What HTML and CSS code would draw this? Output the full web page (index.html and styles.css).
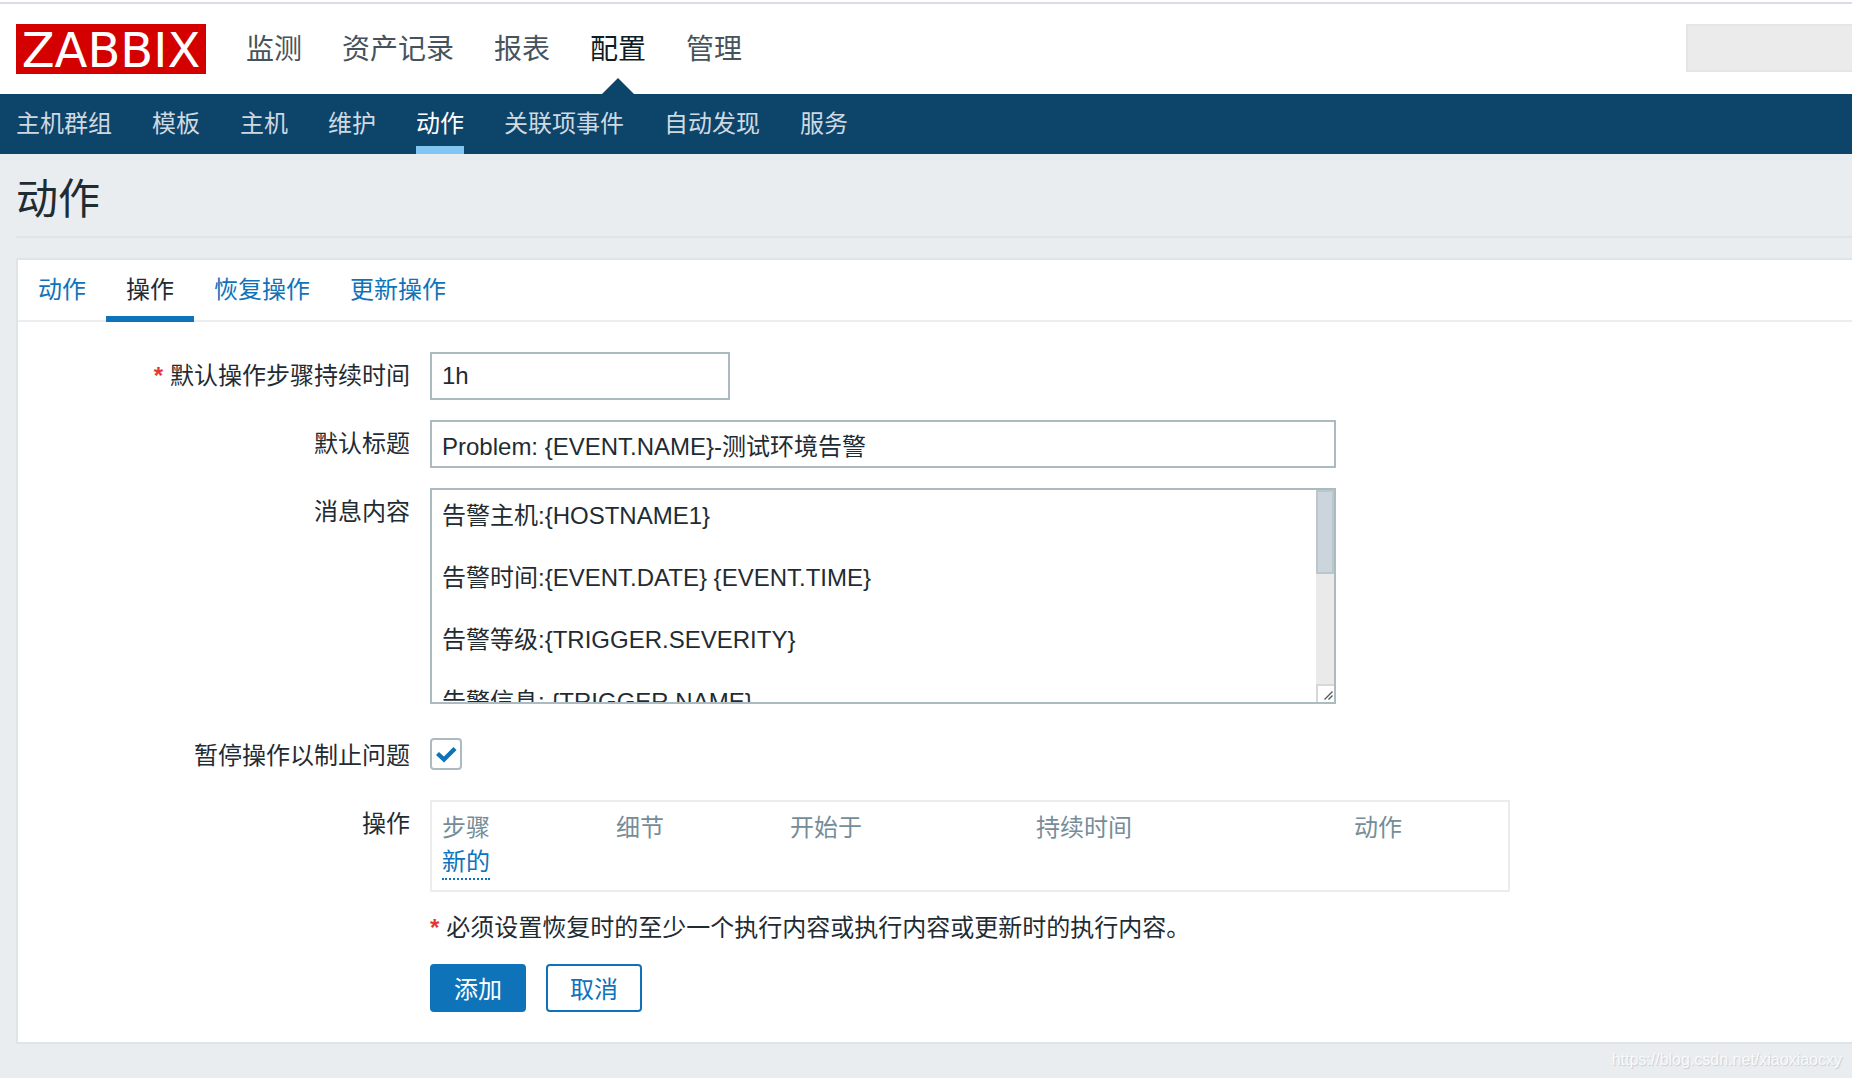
FILE: index.html
```html
<!DOCTYPE html>
<html lang="zh-CN">
<head>
<meta charset="utf-8">
<title>动作</title>
<link rel="stylesheet" href="styles.css">
</head>
<body>
<header class="header">
  <a class="logo" href="#">ZABBIX</a>
  <nav class="main-nav">
    <a href="#">监测</a>
    <a href="#">资产记录</a>
    <a href="#">报表</a>
    <a class="selected" href="#">配置</a>
    <a href="#">管理</a>
  </nav>
  <input class="search" type="text" aria-label="搜索">
</header>
<nav class="sub-nav">
  <a href="#">主机群组</a>
  <a href="#">模板</a>
  <a href="#">主机</a>
  <a href="#">维护</a>
  <a class="selected" href="#">动作</a>
  <a href="#">关联项事件</a>
  <a href="#">自动发现</a>
  <a href="#">服务</a>
</nav>
<main class="content">
  <h1 class="title">动作</h1>
  <form class="card">
    <nav class="tabs">
      <a href="#">动作</a>
      <a class="selected" href="#">操作</a>
      <a href="#">恢复操作</a>
      <a href="#">更新操作</a>
    </nav>
    <div class="form-grid">
      <label class="label required" for="period">默认操作步骤持续时间</label>
      <input class="field field-short" id="period" type="text" value="1h">

      <label class="label" for="subject">默认标题</label>
      <input class="field" id="subject" type="text" value="Problem: {EVENT.NAME}-测试环境告警">

      <label class="label" for="message">消息内容</label>
      <div class="message-box">
        <textarea class="field message" id="message">告警主机:{HOSTNAME1}

告警时间:{EVENT.DATE} {EVENT.TIME}

告警等级:{TRIGGER.SEVERITY}

告警信息: {TRIGGER.NAME}
</textarea>
        <div class="scrollbar" aria-hidden="true">
          <div class="thumb"></div>
          <svg class="grip" viewBox="0 0 18 18"><path d="M0 18V0H18V2H2V18Z" fill="#d8d8d8"/><path d="M2 2H18V18H2Z" fill="#fff"/><path d="M8.500 15.500L16.500 7.500M12.500 15.500L16.500 11.500" stroke="#555" stroke-width="1.300"/></svg>
        </div>
      </div>

      <label class="label" for="pause">暂停操作以制止问题</label>
      <div class="check">
        <input class="check-box" id="pause" type="checkbox" checked>
        <svg class="check-mark" viewBox="0 0 32 32" aria-hidden="true"><path d="M7.500 15.500 L14 21.500 L25 10.500" fill="none" stroke="#0f73ba" stroke-width="4.400"/></svg>
      </div>

      <span class="label">操作</span>
      <div class="table-box">
        <table class="operations">
          <thead>
            <tr>
              <th class="col-step">步骤</th>
              <th class="col-step">细节</th>
              <th class="col-start">开始于</th>
              <th class="col-duration">持续时间</th>
              <th>动作</th>
            </tr>
          </thead>
          <tbody>
            <tr><td colspan="5"><button class="link-button" type="button">新的</button></td></tr>
          </tbody>
        </table>
      </div>

      <p class="note required">必须设置恢复时的至少一个执行内容或执行内容或更新时的执行内容。</p>
      <div class="actions">
        <button class="button primary" type="submit">添加</button>
        <button class="button" type="button">取消</button>
      </div>
    </div>
  </form>
</main>
<footer class="watermark">https://blog.csdn.net/xiaoxiaocxy</footer>
</body>
</html>
```

FILE: styles.css
```css
* {
  box-sizing: border-box;
}

html {
  min-height: 100vh;
  background: #e9edf0;
  border-top: 2px solid #fff;
}

body {
  margin: 0;
  color: #1f2c33;
  font: 24px/32px "Liberation Sans", "Noto Sans CJK SC", sans-serif;
  overflow-x: hidden;
}

a {
  color: inherit;
  text-decoration: none;
}

input,
textarea,
button {
  font: inherit;
  color: inherit;
}

/* Header */
.header {
  display: flex;
  align-items: flex-start;
  height: 92px;
  padding: 20px 0 0 16px;
  background: #fff;
  border-top: 2px solid #dcdce4;
}

.logo {
  width: 190px;
  height: 50px;
  background: #d40000;
  color: #fff;
  font: 48px/52px "DejaVu Sans", sans-serif;
  text-align: center;
}

.main-nav {
  display: flex;
  gap: 40px;
  margin-left: 40px;
  font-size: 28px;
  line-height: 52px;
  color: #47535c;
}

.main-nav a {
  height: 70px;
}

.main-nav .selected {
  position: relative;
  color: #0e1c26;
}

.main-nav .selected::after {
  content: "";
  position: absolute;
  left: 12px;
  bottom: 0;
  border: 16px solid transparent;
  border-top: 0;
  border-bottom-color: #0d456a;
}

.search {
  width: 166px;
  height: 48px;
  margin-left: auto;
  border: 2px solid #e5e5e5;
  border-right: 0;
  background: #ebebeb;
}

.sub-nav {
  display: flex;
  gap: 40px;
  padding: 0 16px;
  background: #0d456a;
  color: #cfd9e1;
  line-height: 60px;
}

.sub-nav a {
  height: 60px;
}

.sub-nav .selected {
  color: #fff;
  border-bottom: 8px solid #82c6f4;
}

/* Page body */
.content {
  padding-left: 16px;
}

.title {
  height: 84px;
  margin: 0 0 20px;
  border-bottom: 2px solid #dfe4e7;
  font-size: 42px;
  font-weight: 400;
  line-height: 92px;
}

.card {
  background: #fff;
  border: 2px solid #dfe4e7;
  border-right: 0;
}

.tabs {
  display: flex;
  border-bottom: 2px solid #ebeef0;
  color: #0f73ba;
  line-height: 60px;
}

.tabs a {
  height: 62px;
  margin-bottom: -2px;
  padding: 0 20px;
}

.tabs .selected {
  color: #1f2c33;
  border-bottom: 6px solid #0f73ba;
}

.form-grid {
  display: grid;
  grid-template-columns: 392px minmax(0, 1080px);
  column-gap: 20px;
  row-gap: 20px;
  padding: 30px 0;
}

.label {
  justify-self: end;
  line-height: 48px;
}

.required::before {
  content: "*";
  margin-right: 7px;
  color: #e33734;
  font-weight: 700;
}

.field {
  width: 100%;
  max-width: 906px;
  height: 48px;
  padding: 0 10px;
  border: 2px solid #acbbc2;
  border-radius: 0;
  background: #fff;
  outline: 0;
}

.field-short {
  max-width: 300px;
}

.message-box {
  position: relative;
  max-width: 906px;
}

.message {
  display: block;
  height: 216px;
  padding: 10px 28px 10px 10px;
  line-height: 31px;
  resize: none;
}

/* Scroll bar laid over the right edge of the message box */
.scrollbar {
  position: absolute;
  top: 2px;
  right: 2px;
  bottom: 2px;
  display: flex;
  flex-direction: column;
  justify-content: space-between;
  width: 18px;
  background: #eaeaea;
}

.thumb {
  height: 84px;
  border: 2px solid #bac8cd;
  background: #ccd5dc;
}

.grip {
  display: block;
  width: 18px;
  height: 18px;
}

.check {
  position: relative;
  height: 56px;
  padding-top: 14px;
}

.label[for="pause"] {
  padding-top: 8px;
}

.check-box {
  display: block;
  appearance: none;
  width: 32px;
  height: 32px;
  margin: 0;
  border: 2px solid #acbbc2;
  border-radius: 4px;
  background: #fff;
}

.check-mark {
  position: absolute;
  left: 0;
  top: 14px;
  width: 32px;
  height: 32px;
  pointer-events: none;
}

.table-box {
  height: 92px;
  padding: 10px;
  border: 2px solid #e9edf0;
}

.operations {
  width: 100%;
  border-collapse: collapse;
  table-layout: fixed;
}

.operations th,
.operations td {
  padding: 0;
  text-align: left;
  font-weight: 400;
}

.operations th {
  padding-bottom: 2px;
  color: #768d99;
}

.col-step {
  width: 174px;
}

.col-start {
  width: 246px;
}

.col-duration {
  width: 318px;
}

.link-button {
  display: block;
  padding: 0;
  border: 0;
  border-bottom: 2px dotted #0f73ba;
  background: none;
  color: #0f73ba;
}

.note,
.actions {
  grid-column: 2;
  margin: 0;
}

.actions {
  display: flex;
  gap: 20px;
}

.button {
  width: 96px;
  height: 48px;
  padding: 4px 0 0;
  border: 2px solid #0f73ba;
  border-radius: 4px;
  background: #fff;
  color: #0f73ba;
}

.primary {
  background: #0f73ba;
  color: #fff;
}

.watermark {
  padding-right: 10px;
  color: #f8fafb;
  font-size: 16px;
  text-align: right;
  text-shadow: 1px 1px 1px #c8cccf;
}
```
